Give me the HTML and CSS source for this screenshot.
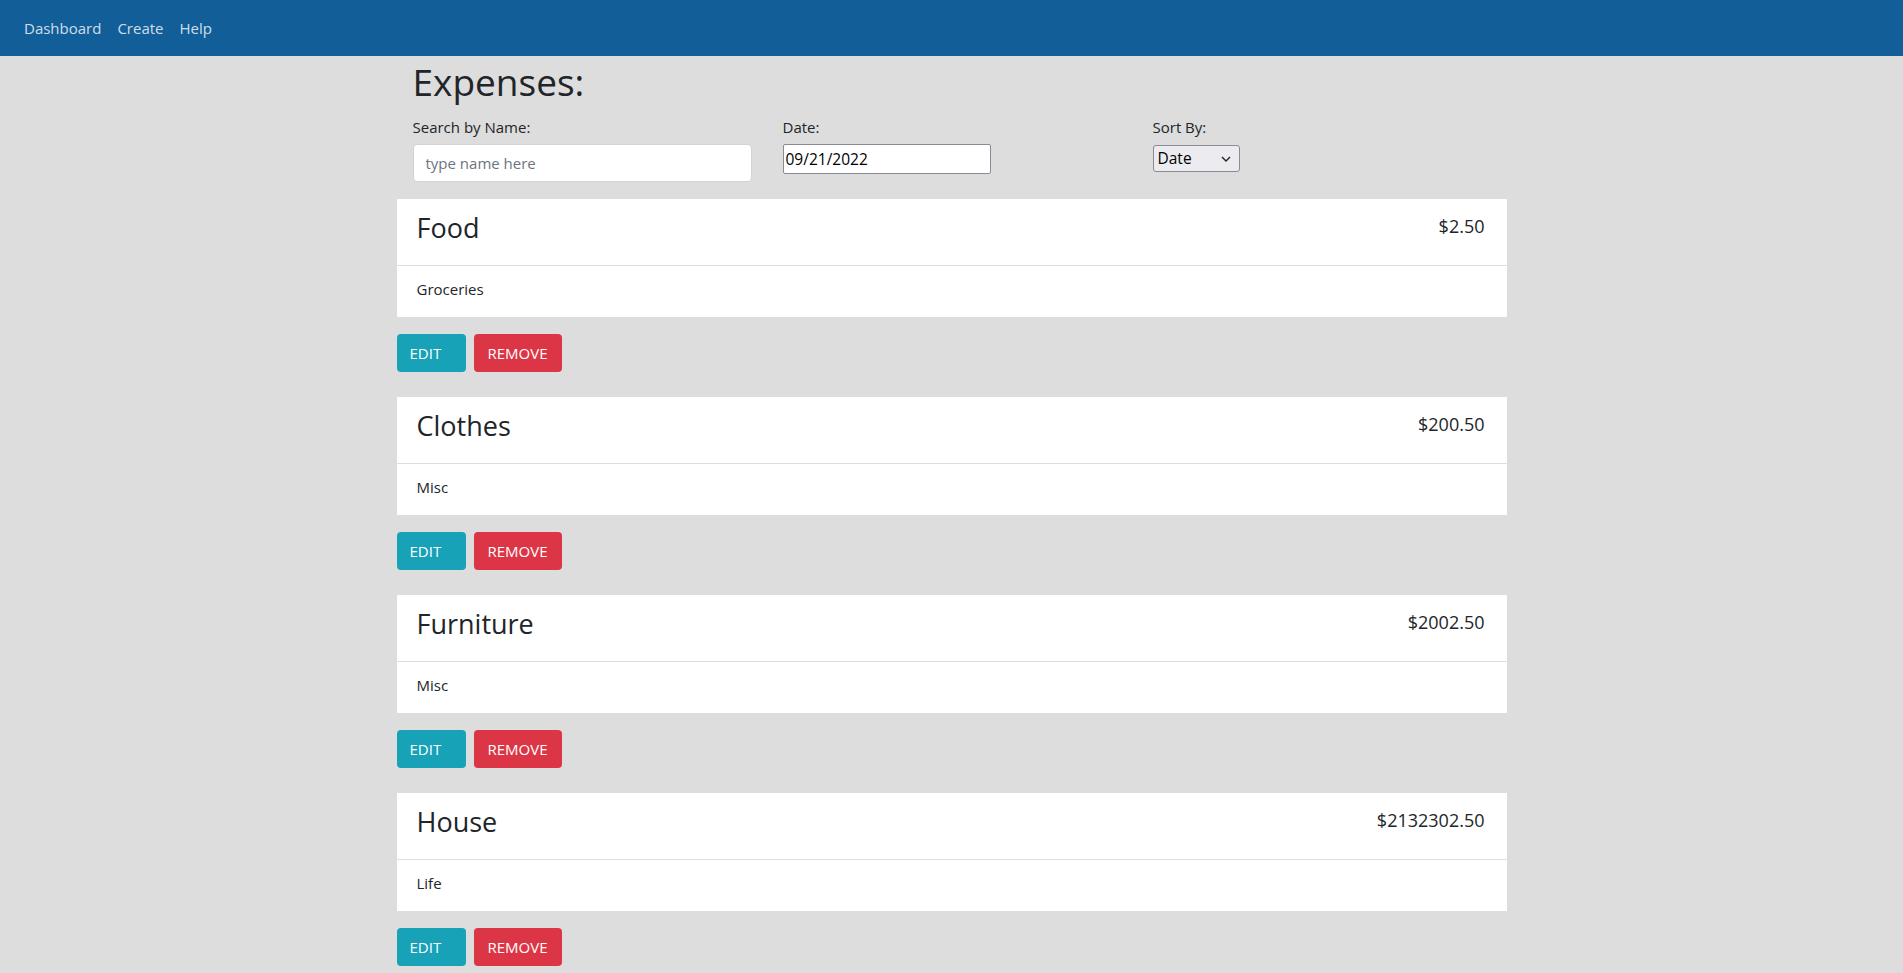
FILE: index.html
```html
<!DOCTYPE html>
<html lang="en">
<head>
<meta charset="utf-8">
<title>Expenses</title>
<link rel="stylesheet" href="styles.css">
</head>
<body>
<nav class="navbar">
  <a class="nav-link" href="#">Dashboard</a>
  <a class="nav-link" href="#">Create</a>
  <a class="nav-link" href="#">Help</a>
</nav>
<main class="container">
  <section class="filters">
    <h1 class="page-title">Expenses:</h1>
    <div class="filter-row">
      <div class="filter-col">
        <label class="filter-label">Search by Name:</label>
        <input class="search-input" type="text" placeholder="type name here">
      </div>
      <div class="filter-col">
        <label class="filter-label">Date:</label>
        <div class="date-input">09/21/2022</div>
      </div>
      <div class="filter-col">
        <label class="filter-label">Sort By:</label>
        <div class="sort-select"><span>Date</span><svg class="chev" width="10" height="6" viewBox="0 0 10 6"><path d="M1 1l4 4 4-4" fill="none" stroke="#222" stroke-width="1.4"/></svg></div>
      </div>
    </div>
  </section>

  <div class="expense">
    <div class="card">
      <div class="card-header"><h3 class="card-title">Food</h3><span class="price">$2.50</span></div>
      <div class="card-body">Groceries</div>
    </div>
    <div class="actions"><button class="btn btn-edit">EDIT</button><button class="btn btn-remove">REMOVE</button></div>
  </div>

  <div class="expense">
    <div class="card">
      <div class="card-header"><h3 class="card-title">Clothes</h3><span class="price">$200.50</span></div>
      <div class="card-body">Misc</div>
    </div>
    <div class="actions"><button class="btn btn-edit">EDIT</button><button class="btn btn-remove">REMOVE</button></div>
  </div>

  <div class="expense">
    <div class="card">
      <div class="card-header"><h3 class="card-title">Furniture</h3><span class="price">$2002.50</span></div>
      <div class="card-body">Misc</div>
    </div>
    <div class="actions"><button class="btn btn-edit">EDIT</button><button class="btn btn-remove">REMOVE</button></div>
  </div>

  <div class="expense">
    <div class="card">
      <div class="card-header"><h3 class="card-title">House</h3><span class="price">$2132302.50</span></div>
      <div class="card-body">Life</div>
    </div>
    <div class="actions"><button class="btn btn-edit">EDIT</button><button class="btn btn-remove">REMOVE</button></div>
  </div>
</main>
</body>
</html>
```

FILE: styles.css
```css
* { box-sizing: border-box; }
html, body { margin: 0; padding: 0; }
body {
  background: #dddddd;
  font-family: "Open Sans", "Noto Sans", sans-serif;
  color: #212529;
  font-size: 15px;
  line-height: 1.5;
}
.navbar {
  height: 56px;
  background: #125e99;
  display: flex;
  align-items: center;
  padding: 0 16px;
}
.nav-link {
  color: rgba(255,255,255,0.8);
  text-decoration: none;
  font-size: 15px;
  padding: 0 8px;
}
.container {
  width: 1110px;
  margin: 0 auto;
}
.filters { padding: 0 16px; }
.page-title {
  margin: 2px 0 0;
  font-size: 37px;
  font-weight: 400;
  line-height: 48px;
}
.filter-row {
  display: grid;
  grid-template-columns: 370px 370px 1fr;
  margin-top: 10px;
}
.filter-col {
  display: flex;
  flex-direction: column;
  align-items: flex-start;
}
.filter-label {
  font-size: 15px;
  line-height: 22px;
  margin-bottom: 6px;
}
.search-input {
  width: 339px;
  height: 38px;
  border: 1px solid #ced4da;
  border-radius: 4px;
  padding: 6px 12px;
  font-family: inherit;
  font-size: 15px;
  background: #fff;
  color: #495057;
}
.search-input::placeholder { color: #6c757d; }
.date-input {
  width: 208px;
  height: 30px;
  border: 1px solid #8a8a95;
  border-radius: 2px;
  background: #fff;
  padding: 0 2px;
  font-size: 15.5px;
  line-height: 28px;
  color: #000;
}
.sort-select {
  width: 87px;
  height: 27px;
  margin-top: 1px;
  border: 1px solid #8a8a95;
  border-radius: 3px;
  background: #ececf0;
  padding: 0 8px 0 4px;
  font-size: 15.5px;
  line-height: 25px;
  color: #000;
  display: flex;
  justify-content: space-between;
  align-items: center;
}
.expense { margin-bottom: 25px; }
.filters + .expense { margin-top: 17px; }
.card {
  background: #fff;
}
.card-header {
  display: flex;
  justify-content: space-between;
  align-items: flex-start;
  padding: 12px 22px 12px 20px;
  border-bottom: 1px solid #dedede;
}
.card-title {
  margin: 0 0 8px;
  font-size: 27px;
  font-weight: 400;
  line-height: 34px;
}
.price {
  font-size: 18px;
  line-height: 24px;
  margin-top: 3px;
}
.card-body {
  padding: 12px 20px 17px;
  font-size: 15px;
  line-height: 22px;
}
.actions {
  display: flex;
  gap: 8px;
  margin-top: 17px;
}
.btn {
  height: 38px;
  border: none;
  border-radius: 4px;
  color: #fff;
  font-family: inherit;
  font-size: 15px;
  padding: 0;
  cursor: pointer;
}
.btn-edit {
  width: 69px;
  background: #17a2b8;
  text-align: left;
  padding-left: 13px;
}
.btn-remove {
  width: 88px;
  background: #dc3545;
}
```
